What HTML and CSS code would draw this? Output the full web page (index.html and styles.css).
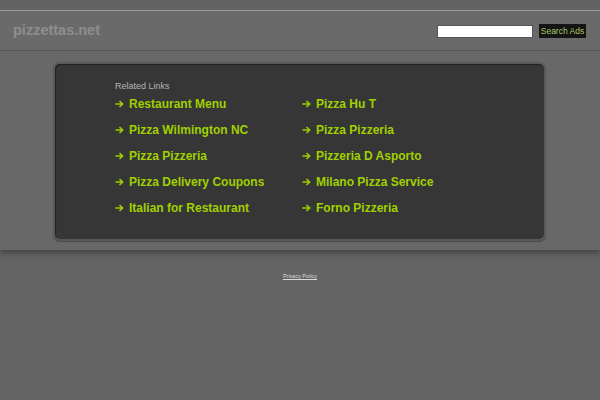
FILE: index.html
```html
<!DOCTYPE html>
<html>
<head>
<meta charset="utf-8">
<link rel="stylesheet" href="styles.css">
</head>
<body>
<div class="topband"></div>
<div class="header">
  <div class="logo">pizzettas.net</div>
  <div class="search">
    <input class="search-input" type="text">
    <button class="search-btn">Search Ads</button>
  </div>
</div>
<div class="main">
  <div class="box">
    <div class="inner">
      <div class="title">Related Links</div>
      <div class="grid">
        <a class="link"><svg class="arr" viewBox="0 0 9 8"><path d="M0.5 4H7.5M4.5 1L7.7 4L4.5 7"/></svg>Restaurant Menu</a>
        <a class="link"><svg class="arr" viewBox="0 0 9 8"><path d="M0.5 4H7.5M4.5 1L7.7 4L4.5 7"/></svg>Pizza Hu T</a>
        <a class="link"><svg class="arr" viewBox="0 0 9 8"><path d="M0.5 4H7.5M4.5 1L7.7 4L4.5 7"/></svg>Pizza Wilmington NC</a>
        <a class="link"><svg class="arr" viewBox="0 0 9 8"><path d="M0.5 4H7.5M4.5 1L7.7 4L4.5 7"/></svg>Pizza Pizzeria</a>
        <a class="link"><svg class="arr" viewBox="0 0 9 8"><path d="M0.5 4H7.5M4.5 1L7.7 4L4.5 7"/></svg>Pizza Pizzeria</a>
        <a class="link"><svg class="arr" viewBox="0 0 9 8"><path d="M0.5 4H7.5M4.5 1L7.7 4L4.5 7"/></svg>Pizzeria D Asporto</a>
        <a class="link"><svg class="arr" viewBox="0 0 9 8"><path d="M0.5 4H7.5M4.5 1L7.7 4L4.5 7"/></svg>Pizza Delivery Coupons</a>
        <a class="link"><svg class="arr" viewBox="0 0 9 8"><path d="M0.5 4H7.5M4.5 1L7.7 4L4.5 7"/></svg>Milano Pizza Service</a>
        <a class="link"><svg class="arr" viewBox="0 0 9 8"><path d="M0.5 4H7.5M4.5 1L7.7 4L4.5 7"/></svg>Italian for Restaurant</a>
        <a class="link"><svg class="arr" viewBox="0 0 9 8"><path d="M0.5 4H7.5M4.5 1L7.7 4L4.5 7"/></svg>Forno Pizzeria</a>
      </div>
    </div>
  </div>
</div>
<div class="footer">
  <a class="privacy">Privacy Policy</a>
</div>
</body>
</html>
```
FILE: styles.css
```css
html, body {
  margin: 0;
  padding: 0;
  background: #646464;
  font-family: "Liberation Sans", Arial, sans-serif;
  width: 600px;
  height: 400px;
  overflow: hidden;
}
.topband {
  height: 10px;
  background: #636363;
  border-bottom: 1px solid #9a9a9a;
}
.header {
  height: 39px;
  background: #6a6a6a;
  border-bottom: 1px solid #5a5a5a;
  display: flex;
  align-items: center;
  justify-content: space-between;
  padding: 0 14px 0 13px;
}
.logo {
  font-size: 14.5px;
  font-weight: bold;
  color: #8e8e8e;
  margin-top: -1px;
}
.search {
  display: flex;
  align-items: center;
  gap: 6px;
  margin-top: 1px;
}
.search-input {
  width: 96px;
  height: 13px;
  box-sizing: border-box;
  border: 1px solid #555;
  background: #fff;
  padding: 0;
  margin: 0;
}
.search-btn {
  height: 14px;
  width: 47px;
  background: #141414;
  color: #a4c864;
  border: none;
  font-family: "Liberation Sans", Arial, sans-serif;
  font-size: 8.5px;
  padding: 0;
  margin: 0;
  white-space: nowrap;
}
.main {
  height: 199px;
  background: #686868;
  padding-top: 11px;
  box-sizing: border-box;
  box-shadow: 0 3px 6px rgba(0,0,0,0.35);
  position: relative;
  z-index: 1;
}
.box {
  margin-left: 53px;
  width: 493px;
  height: 179px;
  box-sizing: border-box;
  border-radius: 7px;
  background: #595959;
  padding: 2px;
  box-shadow: 0 1px 1px rgba(0,0,0,0.3);
}
.inner {
  height: 100%;
  box-sizing: border-box;
  border-radius: 5px;
  background: #363636;
  padding: 17px 0 0 60px;
  box-shadow: inset 1px 1px 1px rgba(0,0,0,0.4);
}
.title {
  font-size: 9px;
  color: #b4b4b4;
  height: 12px;
}
.grid {
  display: grid;
  grid-template-columns: 187px 200px;
  grid-auto-rows: 26px;
  align-items: start;
  margin-top: 3px;
}
.link {
  font-size: 12px;
  font-weight: bold;
  color: #a0d000;
  white-space: nowrap;
  line-height: 16px;
  display: flex;
  align-items: center;
}
.arr {
  width: 9px;
  height: 8px;
  margin-right: 5px;
  fill: none;
  stroke: #a0d000;
  stroke-width: 1.5;
  flex: none;
}
.footer {
  padding-top: 14px;
  text-align: center;
}
.privacy {
  font-size: 5.5px;
  color: #d8d8d8;
  text-decoration: underline;
}
```
